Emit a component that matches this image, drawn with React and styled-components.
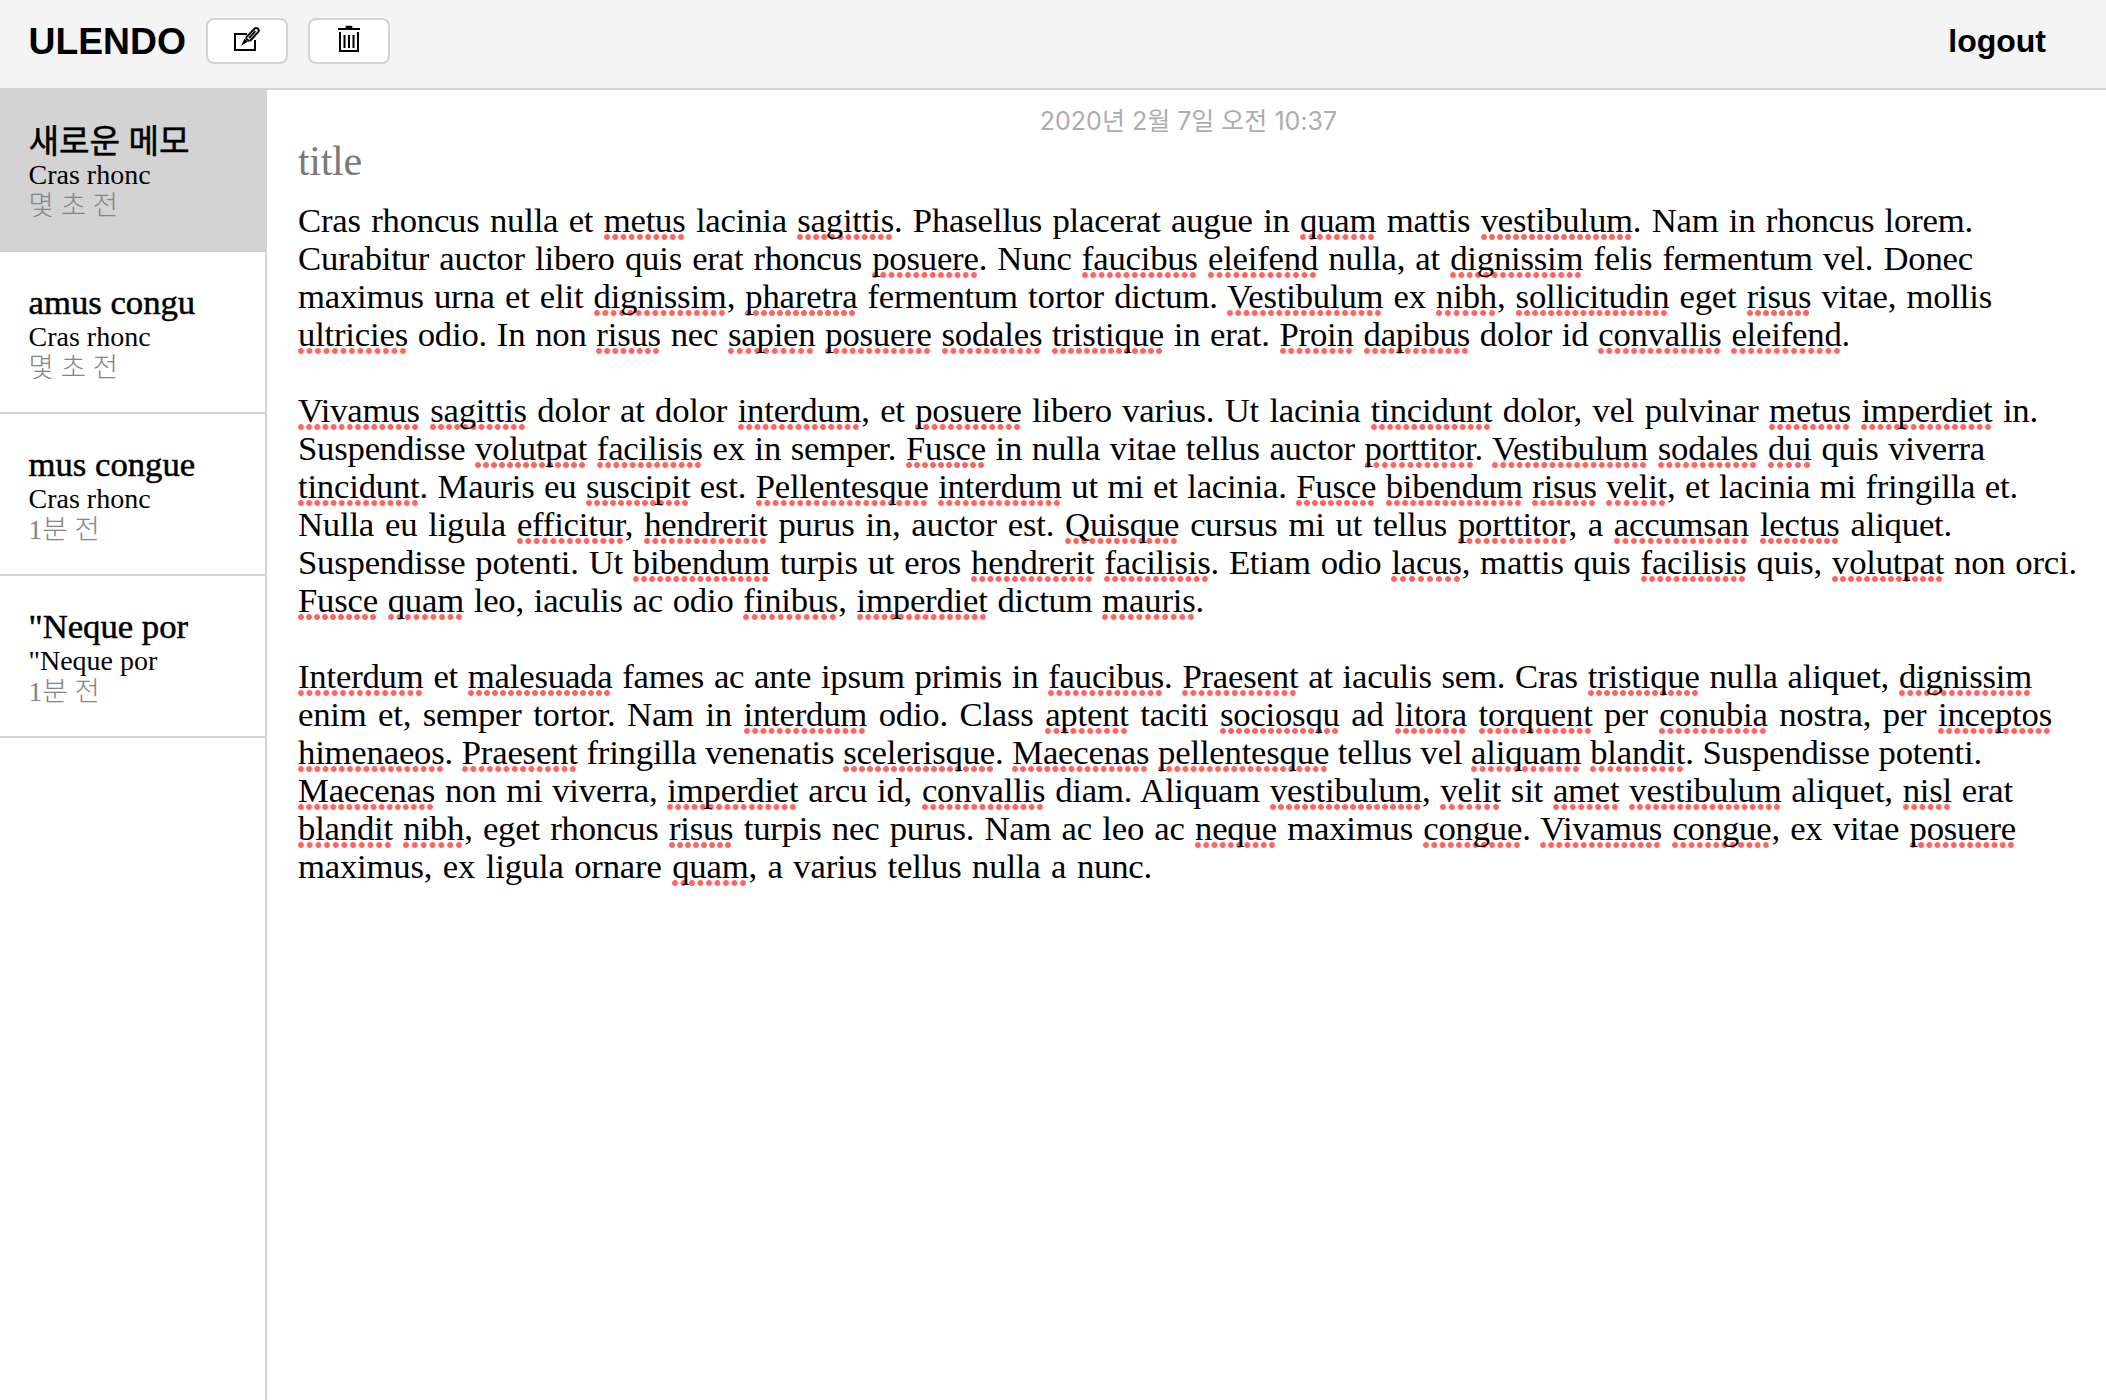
import React from "react";
import styled, { createGlobalStyle } from "styled-components";

const serif = `"Liberation Serif", "Noto Sans CJK KR", serif`;
const LINE = "#d3d3d3";

const GlobalStyle = createGlobalStyle`
  *, *::before, *::after { box-sizing: border-box; }
  body { margin: 0; background: #fff; color: #000; }
  h1, h2, p { margin: 0; }
`;

const Page = styled.div`
  display: flex;
  flex-direction: column;
  height: 100vh;
  overflow: hidden;
`;

const Header = styled.header`
  display: flex;
  align-items: flex-start;
  flex: none;
  height: 90px;
  padding: 18px 60px 0 28px;
  border-bottom: 2px solid ${LINE};
  background: #f4f4f4;
  font-family: "Liberation Sans", Arial, sans-serif;
`;

const Brand = styled.h1`
  width: 178px;
  padding-left: 0.5px;
  font-size: 37.3px;
  font-weight: 700;
  line-height: 46px;
`;

const ToolButton = styled.button`
  display: flex;
  align-items: center;
  justify-content: center;
  width: 82px;
  height: 46px;
  margin-right: 20px;
  padding: 0;
  border: 2px solid ${LINE};
  border-radius: 8px;
  background: #fff;
  color: #000;
`;

const Icon = styled.svg`
  flex: none;
  overflow: visible;
  fill: none;
  stroke: currentColor;
`;

const Logout = styled.a`
  margin-left: auto;
  font-size: 32px;
  font-weight: 700;
  line-height: 47px;
`;

const Main = styled.main`
  display: flex;
  flex: 1;
  min-height: 0;
`;

const Sidebar = styled.nav`
  flex: none;
  width: 267px;
  border-right: 2px solid ${LINE};
`;

const NoteItem = styled.div`
  height: 162px;
  padding: 31px 0 0 28.5px;
  border-bottom: 2px solid ${LINE};
  background: ${(p) => (p.$selected ? LINE : "#fff")};
  font-family: ${serif};
  white-space: nowrap;
  overflow: hidden;
`;

const NoteTitle = styled.h2`
  height: 39px;
  font-size: ${(p) => (p.$hangul ? 33.2 : 34.7)}px;
  font-weight: 400;
  line-height: ${(p) => (p.$hangul ? 42 : 40)}px;
  -webkit-text-stroke: 0.5px #000;
`;

const NoteText = styled.p`
  height: 30px;
  font-size: 28px;
  line-height: 30px;
`;

const NoteTime = styled(NoteText)`
  color: #858585;
  font-size: 27.5px;
  font-weight: 300;
  line-height: 32px;
`;

const Editor = styled.section`
  flex: 1;
  display: flex;
  flex-direction: column;
  min-width: 0;
  padding: 15px 15px 0 31px;
  font-family: ${serif};
`;

const EditedAt = styled.p`
  align-self: center;
  height: 31px;
  margin-right: 12px;
  color: #adadad;
  font-family: Inter, "Noto Sans CJK KR", sans-serif;
  font-size: 25px;
  font-weight: 400;
  line-height: 33px;
  white-space: nowrap;
`;

const TitleField = styled.p`
  height: 66px;
  color: #7a7a7a;
  font-size: 42px;
  letter-spacing: -0.3px;
  line-height: 50px;
`;

const Paragraph = styled.div`
  margin-bottom: 38px;
`;

const Line = styled.p`
  width: ${(p) => p.$width}px;
  height: 38px;
  font-size: 34.7px;
  letter-spacing: -0.2px;
  word-spacing: -4px;
  line-height: 38px;
  text-align: justify;
  text-align-last: justify;
`;

const Misspelled = styled.span`
  background-image: radial-gradient(circle 3.4px at 3px 3px, #ff6460 0 2.5px, transparent 3.4px);
  background-size: 8px 6px;
  background-position: left bottom;
  background-repeat: space no-repeat;
`;

const notes = [
  { title: "새로운 메모", text: "Cras rhonc", time: "몇 초 전", selected: true, hangul: true },
  { title: "amus congu", text: "Cras rhonc", time: "몇 초 전" },
  { title: "mus congue", text: "Cras rhonc", time: "1분 전" },
  { title: '"Neque por', text: '"Neque por', time: "1분 전" },
];

// Words between underscores are flagged by the spell checker.
const paragraphs = [
  [
    [1675, "Cras rhoncus nulla et _metus_ lacinia _sagittis_. Phasellus placerat augue in _quam_ mattis _vestibulum_. Nam in rhoncus lorem."],
    [1675, "Curabitur auctor libero quis erat rhoncus _posuere_. Nunc _faucibus_ _eleifend_ nulla, at _dignissim_ felis fermentum vel. Donec"],
    [1694, "maximus urna et elit _dignissim_, _pharetra_ fermentum tortor dictum. _Vestibulum_ ex _nibh_, _sollicitudin_ eget _risus_ vitae, mollis"],
    [1552, "_ultricies_ odio. In non _risus_ nec _sapien_ _posuere_ _sodales_ _tristique_ in erat. _Proin_ _dapibus_ dolor id _convallis_ _eleifend_."],
  ],
  [
    [1740, "_Vivamus_ _sagittis_ dolor at dolor _interdum_, et _posuere_ libero varius. Ut lacinia _tincidunt_ dolor, vel pulvinar _metus_ _imperdiet_ in."],
    [1687, "Suspendisse _volutpat_ _facilisis_ ex in semper. _Fusce_ in nulla vitae tellus auctor _porttitor_. _Vestibulum_ _sodales_ _dui_ quis viverra"],
    [1720, "_tincidunt_. Mauris eu _suscipit_ est. _Pellentesque_ _interdum_ ut mi et lacinia. _Fusce_ _bibendum_ _risus_ _velit_, et lacinia mi fringilla et."],
    [1654, "Nulla eu ligula _efficitur_, _hendrerit_ purus in, auctor est. _Quisque_ cursus mi ut tellus _porttitor_, a _accumsan_ _lectus_ aliquet."],
    [1779, "Suspendisse potenti. Ut _bibendum_ turpis ut eros _hendrerit_ _facilisis_. Etiam odio _lacus_, mattis quis _facilisis_ quis, _volutpat_ non orci."],
    [906, "_Fusce_ _quam_ leo, iaculis ac odio _finibus_, _imperdiet_ dictum _mauris_."],
  ],
  [
    [1734, "_Interdum_ et _malesuada_ fames ac ante ipsum primis in _faucibus_. _Praesent_ at iaculis sem. Cras _tristique_ nulla aliquet, _dignissim_"],
    [1754, "enim et, semper tortor. Nam in _interdum_ odio. Class _aptent_ taciti _sociosqu_ ad _litora_ _torquent_ per _conubia_ nostra, per _inceptos_"],
    [1684, "_himenaeos_. _Praesent_ fringilla venenatis _scelerisque_. _Maecenas_ _pellentesque_ tellus vel _aliquam_ _blandit_. Suspendisse potenti."],
    [1715, "_Maecenas_ non mi viverra, _imperdiet_ arcu id, _convallis_ diam. Aliquam _vestibulum_, _velit_ sit _amet_ _vestibulum_ aliquet, _nisl_ erat"],
    [1718, "_blandit_ _nibh_, eget rhoncus _risus_ turpis nec purus. Nam ac leo ac _neque_ maximus _congue_. _Vivamus_ _congue_, ex vitae _posuere_"],
    [854, "maximus, ex ligula ornare _quam_, a varius tellus nulla a nunc."],
  ],
];

const renderWords = (text) =>
  text.split("_").map((part, i) => (i % 2 ? <Misspelled key={i}>{part}</Misspelled> : part));

const ComposeIcon = () => (
  <Icon width="28" height="28" viewBox="0 0 28 28">
    <path d="M14 7H2v16h20V13" strokeWidth="2" />
    <path d="M8 19l3.4-7.2 3.6 2.6z" fill="currentColor" stroke="none" />
    <path d="M13 10.6l8.500-8.800c2-2 5.500.4 3.800 3.200l-8.500 9" strokeWidth="2" />
    <path d="M12.500 11l4 3.400M16 11.200l6.500-7" strokeWidth="1.700" />
  </Icon>
);

const TrashIcon = () => (
  <Icon width="24" height="28" viewBox="0 0 24 28">
    <path d="M1 2h22" strokeWidth="2" />
    <path d="M8.700 0h6.600" strokeWidth="2.400" />
    <path d="M3 5v19h18V5" strokeWidth="2" />
    <path d="M7.500 8v13M12 8v13M16.500 8v13" strokeWidth="2" />
  </Icon>
);

export default function App() {
  return (
    <Page>
      <GlobalStyle />
      <Header>
        <Brand>ULENDO</Brand>
        <ToolButton aria-label="new note"><ComposeIcon /></ToolButton>
        <ToolButton aria-label="delete note"><TrashIcon /></ToolButton>
        <Logout>logout</Logout>
      </Header>
      <Main>
        <Sidebar>
          {notes.map((n, i) => (
            <NoteItem key={i} $selected={n.selected}>
              <NoteTitle $hangul={n.hangul}>{n.title}</NoteTitle>
              <NoteText>{n.text}</NoteText>
              <NoteTime>{n.time}</NoteTime>
            </NoteItem>
          ))}
        </Sidebar>
        <Editor>
          <EditedAt>2020년 2월 7일 오전 10:37</EditedAt>
          <TitleField>title</TitleField>
          {paragraphs.map((lines, i) => (
            <Paragraph key={i}>
              {lines.map(([width, text]) => (
                <Line key={text} $width={width}>{renderWords(text)}</Line>
              ))}
            </Paragraph>
          ))}
        </Editor>
      </Main>
    </Page>
  );
}
